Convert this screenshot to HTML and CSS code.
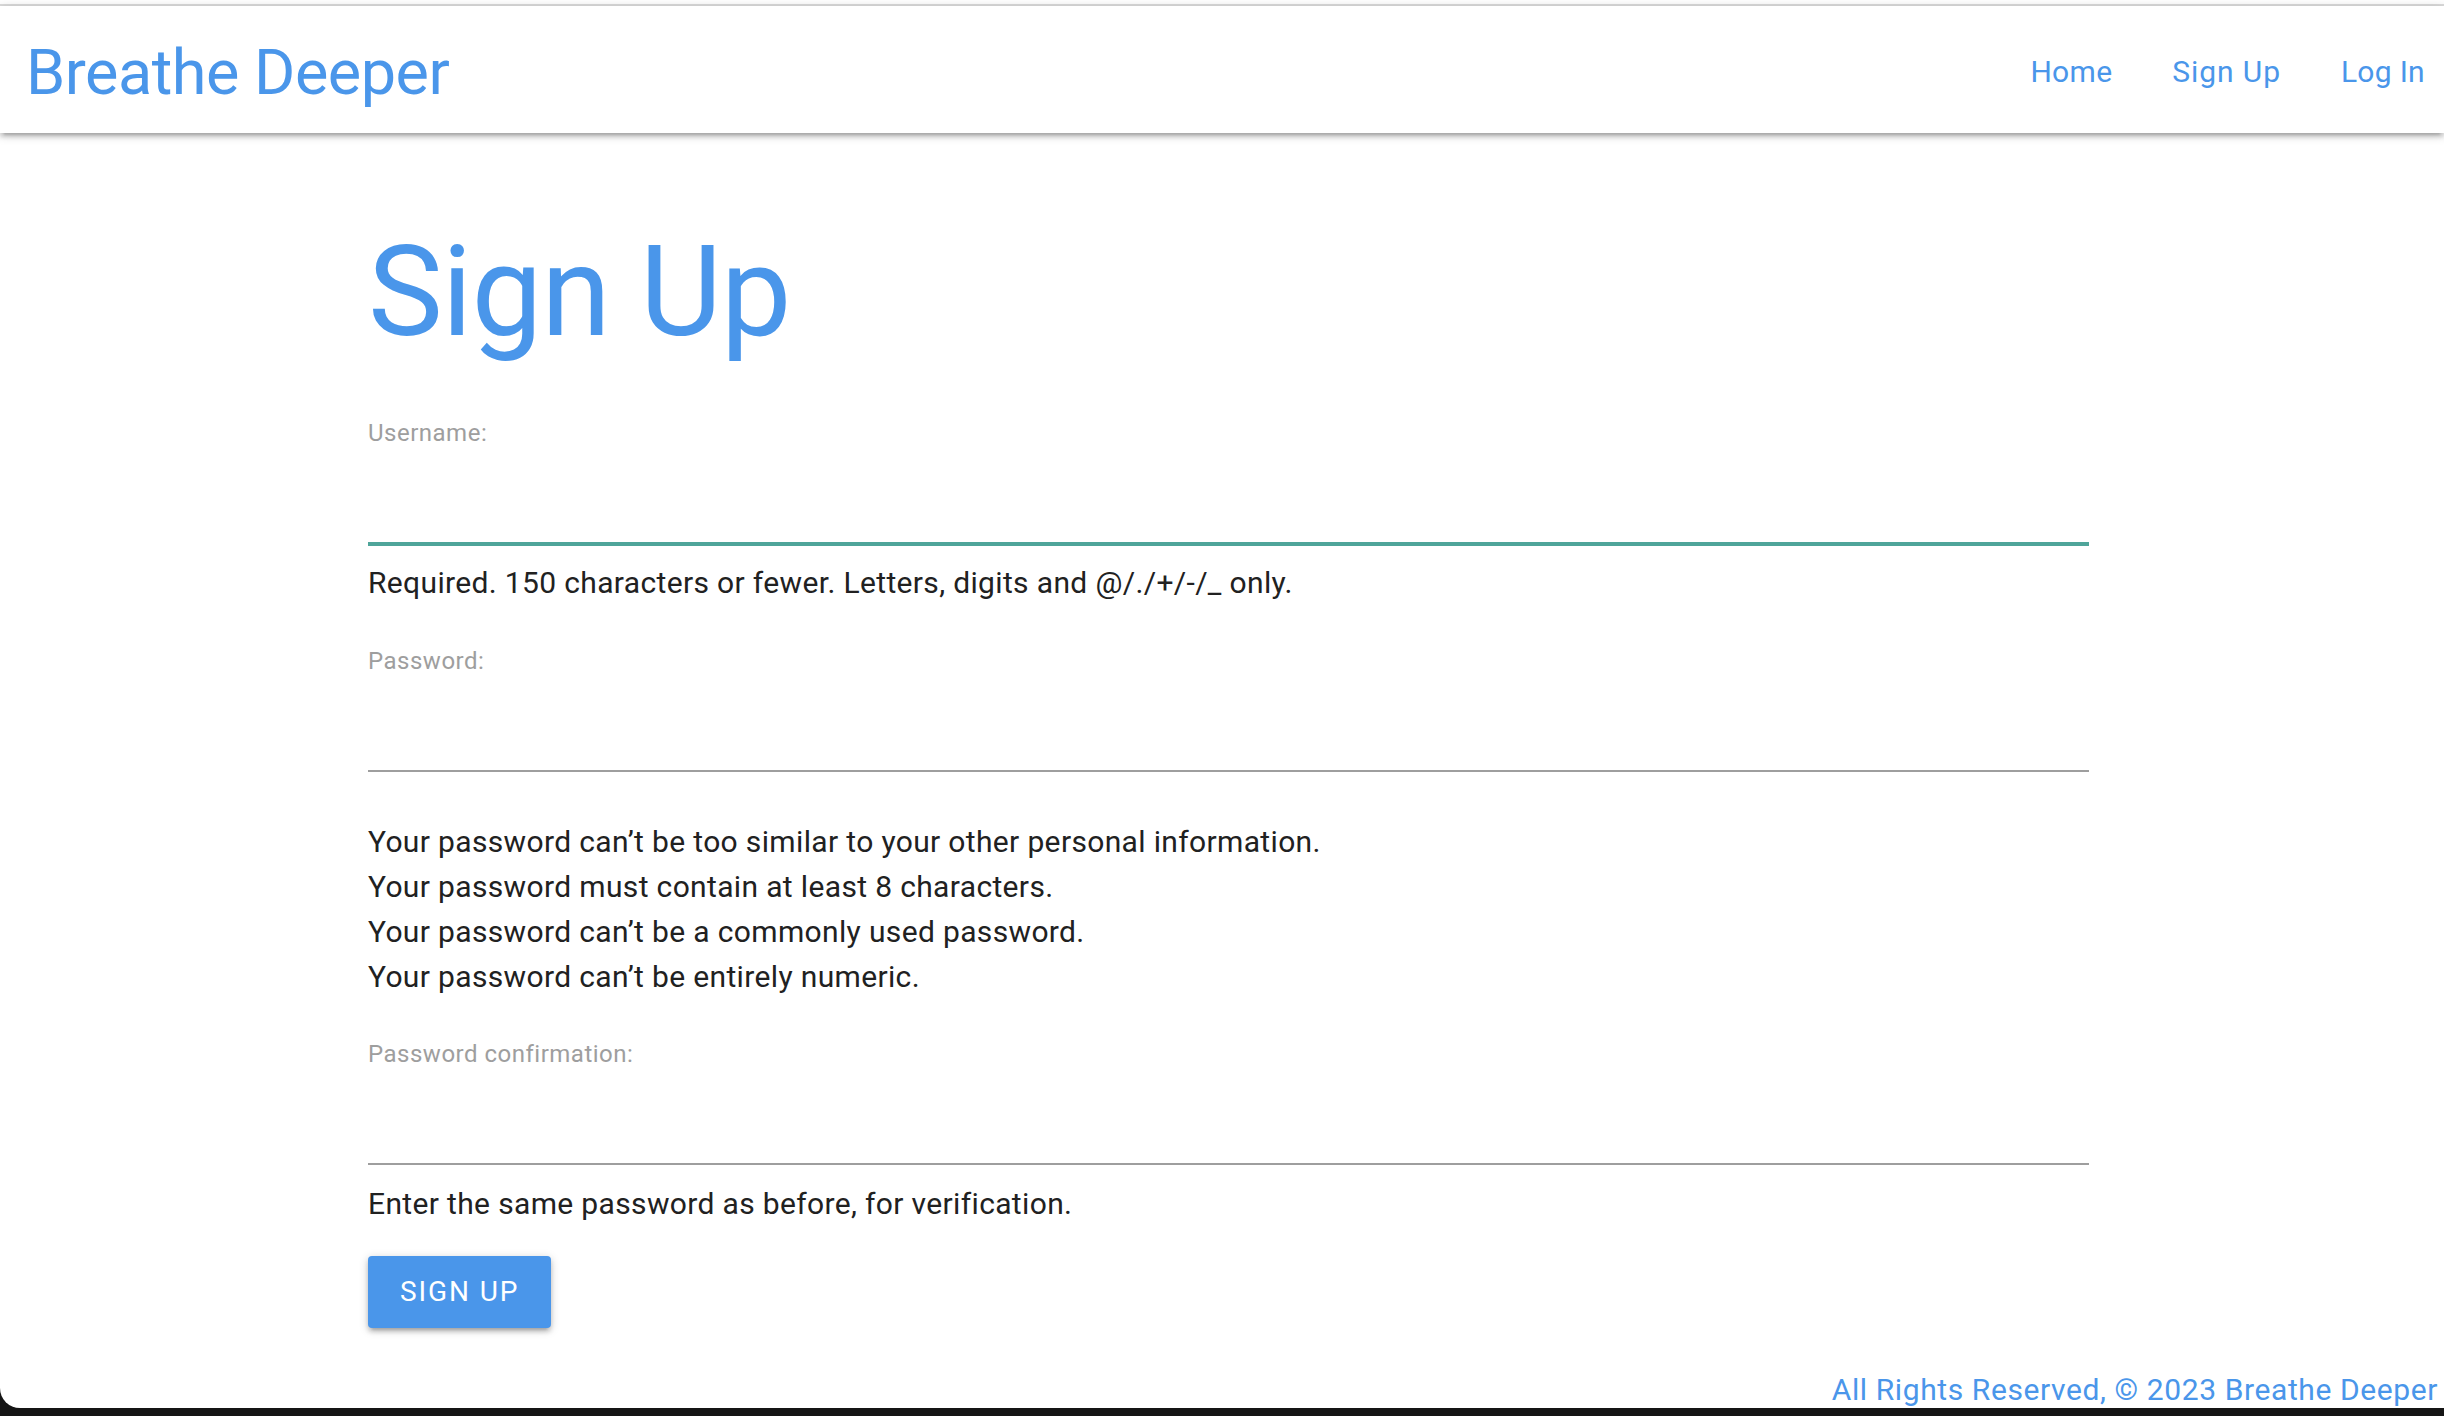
FILE: index.html
```html
<!DOCTYPE html>
<html lang="en">
<head>
<meta charset="utf-8">
<title>Sign Up - Breathe Deeper</title>
<link rel="stylesheet" href="styles.css">
</head>
<body>
<div class="window">
  <div class="topline"></div>
  <nav class="navbar">
    <a class="brand" href="#">Breathe Deeper</a>
    <ul class="nav-links">
      <li><a href="#">Home</a></li>
      <li><a href="#" class="wide">Sign Up</a></li>
      <li><a href="#" class="last">Log In</a></li>
    </ul>
  </nav>
  <main class="container">
    <h1 class="title">Sign Up</h1>
    <form class="form">
      <div class="field field-username">
        <label class="field-label" for="u">Username:</label>
        <input class="field-input is-focused" id="u" type="text">
        <span class="helptext">Required. 150 characters or fewer. Letters, digits and @/./+/-/_ only.</span>
      </div>
      <div class="field field-password">
        <label class="field-label" for="p1">Password:</label>
        <input class="field-input" id="p1" type="password">
        <ul class="helplist">
          <li>Your password can’t be too similar to your other personal information.</li>
          <li>Your password must contain at least 8 characters.</li>
          <li>Your password can’t be a commonly used password.</li>
          <li>Your password can’t be entirely numeric.</li>
        </ul>
      </div>
      <div class="field field-confirm">
        <label class="field-label" for="p2">Password confirmation:</label>
        <input class="field-input" id="p2" type="password">
        <span class="helptext">Enter the same password as before, for verification.</span>
      </div>
      <button class="btn" type="button">Sign Up</button>
    </form>
  </main>
  <footer class="footer">All Rights Reserved, © 2023 Breathe Deeper</footer>
</div>
</body>
</html>
```

FILE: styles.css
```css
html, body {
  margin: 0;
  padding: 0;
}
body {
  background: #151515;
  height: 1416px;
  overflow: hidden;
  font-family: Roboto, "Liberation Sans", sans-serif;
  color: #212121;
}
.window {
  height: 1408px;
  background: #fff;
  border-bottom-left-radius: 20px;
  display: flex;
  flex-direction: column;
  overflow: hidden;
}
.topline {
  height: 4px;
  border-bottom: 2px solid #dcdcdc;
  background: #fff;
  flex: none;
}
.navbar {
  flex: none;
  height: 127px;
  display: flex;
  align-items: flex-start;
  justify-content: space-between;
  background: #fff;
  box-shadow: 0 4px 4px 0 rgba(0,0,0,0.14), 0 6px 2px -4px rgba(0,0,0,0.12), 0 2px 10px 0 rgba(0,0,0,0.2);
  position: relative;
  z-index: 2;
  padding-left: 26px;
}
.brand {
  font-size: 63px;
  line-height: 127px;
  padding-top: 3px;
  color: #4a96ea;
  text-decoration: none;
  white-space: nowrap;
  letter-spacing: -0.5px;
}
.nav-links {
  list-style: none;
  margin: 0;
  padding: 0;
  display: flex;
}
.nav-links a {
  display: block;
  font-size: 30px;
  line-height: 127px;
  padding: 2px 30px 0;
  color: #4a96ea;
  text-decoration: none;
  letter-spacing: 0.3px;
}
.nav-links a.wide {
  letter-spacing: 0.9px;
}
.nav-links a.last {
  padding-right: 19px;
}
.container {
  width: 1721px;
  margin-left: 368px;
  flex: none;
}
.title {
  margin: 90px 0 57px;
  font-size: 126px;
  line-height: 138px;
  font-weight: 400;
  color: #4a96ea;
  letter-spacing: -1px;
}
.form {
  display: flex;
  flex-direction: column;
  align-items: flex-start;
}
.field {
  display: flex;
  flex-direction: column;
  width: 100%;
}
.field-username { margin-bottom: 41px; }
.field-password { margin-bottom: 40px; }
.field-label {
  font-size: 24px;
  line-height: 30px;
  color: #9e9e9e;
  letter-spacing: 0.5px;
}
.field-input {
  box-sizing: border-box;
  height: 96px;
  width: 100%;
  border: none;
  border-bottom: 2px solid #9e9e9e;
  background: transparent;
  outline: none;
  padding: 0;
  margin: 0;
  font-size: 30px;
  font-family: inherit;
}
.field-input.is-focused {
  border-bottom-color: #4fa59a;
  box-shadow: 0 2px 0 0 #4fa59a;
}
.helptext {
  margin-top: 16px;
  font-size: 30px;
  line-height: 45px;
  color: #212121;
  letter-spacing: 0.35px;
}
.helplist {
  list-style: none;
  margin: 47px 0 0;
  padding: 0;
  font-size: 30px;
  line-height: 45px;
  color: #212121;
  letter-spacing: 0.35px;
}
.btn {
  margin-top: 30px;
  height: 72px;
  padding: 0 32px;
  border: none;
  border-radius: 4px;
  background: #4a96ea;
  color: #fff;
  font-family: inherit;
  font-size: 28px;
  line-height: 72px;
  letter-spacing: 1.9px;
  text-transform: uppercase;
  box-shadow: 0 4px 4px 0 rgba(0,0,0,0.14), 0 6px 2px -4px rgba(0,0,0,0.12), 0 2px 10px 0 rgba(0,0,0,0.2);
}
.footer {
  margin-top: auto;
  text-align: right;
  padding-right: 6px;
  font-size: 30px;
  line-height: 36px;
  color: #4a96ea;
  white-space: nowrap;
  letter-spacing: 0.6px;
}
```
